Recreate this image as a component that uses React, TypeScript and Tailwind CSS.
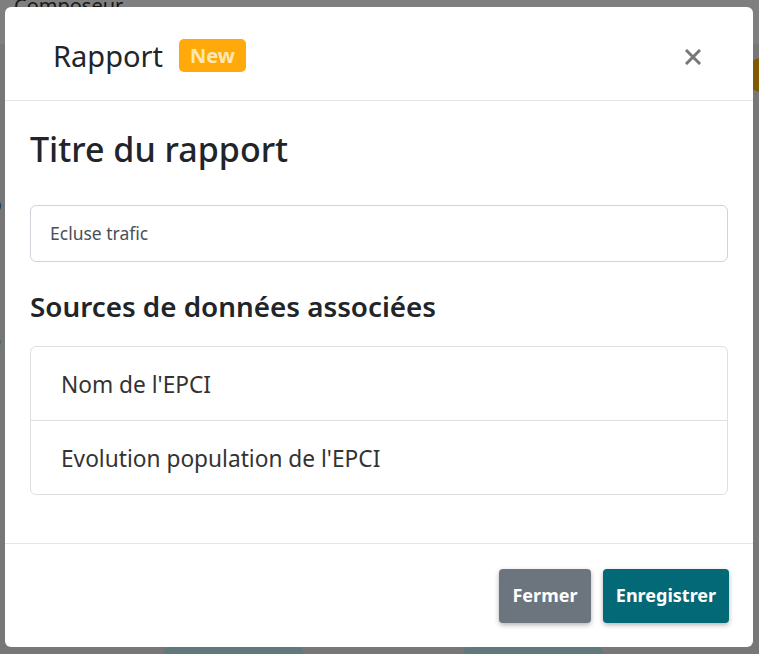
import React from "react";

const font = { fontFamily: '"Noto Sans", "Open Sans", Arial, sans-serif' };

export default function App() {
  return (
    <div className="relative w-[759px] h-[654px] overflow-hidden bg-[#eeeeee]" style={font}>
      {/* page behind */}
      <div className="h-[48px] bg-white px-[14px] text-[20px] text-[#333] leading-[20px] -mt-[4px] pt-0">Composeur</div>
      <div className="flex flex-col">
        <div className="pl-0 mt-[140px] text-[26px] text-[#0b3050] -ml-[14px]">p</div>
        <div className="mt-[100px] text-[22px] text-[#222] -ml-[12px]">o</div>
      </div>
      <div className="absolute right-[-20px] top-[58px] w-[34px] h-[34px] rounded-full bg-[#ffb400]" />
      <div className="absolute left-[162px] top-[640px] w-[143px] h-[40px] rounded-[20px] bg-[#bff2fb]" />
      <div className="absolute left-[462px] top-[640px] w-[143px] h-[40px] rounded-[20px] bg-[#bff2fb]" />
      {/* backdrop */}
      <div className="absolute inset-0 bg-black/50" />
      {/* modal */}
      <div className="absolute left-[5px] top-[7px] w-[748px] h-[640px] rounded-[6px] bg-white flex flex-col">
        <div className="h-[94px] border-b border-[#e5e5e5] flex items-center justify-between pl-[48px] pr-[52px] pt-[4px]">
          <div className="flex items-center gap-[16px]">
            <span className="text-[29px] text-[#212529] leading-none">Rapport</span>
            <span className="h-[33px] px-[11px] rounded-[5px] bg-[#ffa90a] text-[#ffe7b3] font-bold text-[20px] flex items-center">New</span>
          </div>
          <svg width="16" height="16" viewBox="0 0 16 16" className="mt-[3px]">
            <path d="M2 2 L14 14 M14 2 L2 14" stroke="#777" strokeWidth="3" strokeLinecap="square" />
          </svg>
        </div>
        <div className="flex-1 px-[25px] pt-[28px]">
          <div className="text-[34px] leading-[40px] font-medium text-[#212529]">Titre du rapport</div>
          <div className="mt-[36px] h-[57px] border border-[#ced4da] rounded-[6px] flex items-center px-[19px] text-[17.5px] text-[#495057]">Ecluse trafic</div>
          <div className="mt-[27px] text-[27.8px] leading-[34px] font-semibold text-[#212529]">Sources de données associées</div>
          <div className="mt-[23px] border border-[#dfdfdf] rounded-[6px] flex flex-col">
            <div className="h-[74px] flex items-center px-[30px] pt-[3px] text-[22.7px] text-[#333] border-b border-[#dfdfdf]">Nom de l'EPCI</div>
            <div className="h-[73px] flex items-center px-[30px] pt-[3px] text-[22.7px] text-[#333]">Evolution population de l'EPCI</div>
          </div>
        </div>
        <div className="h-[104px] border-t border-[#e5e5e5] flex items-center justify-end gap-[12px] pr-[24px]">
          <button className="h-[54px] w-[92px] rounded-[4px] bg-[#6c757d] text-white font-bold text-[18px] shadow-[0_2px_5px_rgba(0,0,0,0.3)]">Fermer</button>
          <button className="h-[54px] w-[126px] rounded-[4px] bg-[#036977] text-white font-bold text-[18px] shadow-[0_2px_5px_rgba(0,0,0,0.3)]">Enregistrer</button>
        </div>
      </div>
    </div>
  );
}
